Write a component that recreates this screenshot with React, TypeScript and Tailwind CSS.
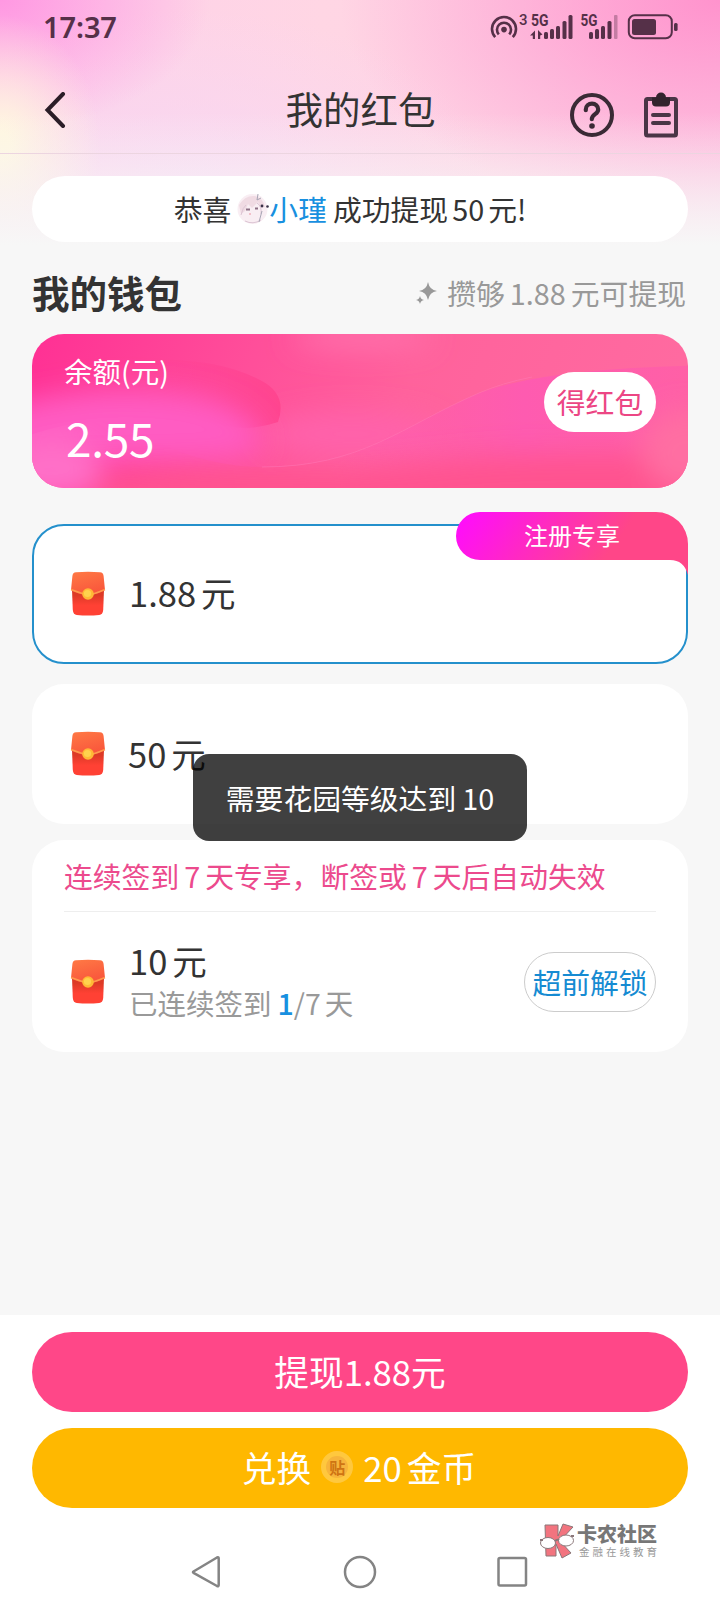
// Packages
import React from "react";

// Status bar icons
const StatusIcons: React.FC = () => (
  <svg width="190" height="32" viewBox="0 0 190 32" fill="none">
    {/* Hotspot */}
    <g stroke="#553048" strokeWidth="2.6">
      <path d="M6.2 25.2A12 12 0 1 1 23.8 25.2" />
      <path d="M9.8 22.4A7 7 0 1 1 20.2 22.4" />
    </g>
    <circle cx="15" cy="17.6" r="2.8" fill="#553048" />
    <g fill="#553048" fontFamily="Roboto, sans-serif">
      <text x="30" y="12.6" fontSize="15" fontWeight="500">3</text>
      <text x="42" y="14.2" fontSize="16" fontWeight="700" textLength="17.5" lengthAdjust="spacingAndGlyphs">5G</text>
      <text x="91.5" y="14.2" fontSize="16" fontWeight="700" textLength="17" lengthAdjust="spacingAndGlyphs">5G</text>
    </g>
    {/* Signal bars */}
    <g fill="#553048">
      <path d="M41 23.5l5-5V27h-2.200v-3.500z" />
      <path d="M53.500 22.500l-4.500-4.500V27h2.200v-3.500z" />
      <rect x="55" y="20" width="4" height="7" rx="1.5" />
      <rect x="61" y="17" width="4" height="10" rx="1.5" />
      <rect x="67" y="14" width="4" height="13" rx="1.5" />
      <rect x="73.5" y="9" width="4" height="18" rx="1.5" />
      <rect x="79.5" y="3" width="4" height="24" rx="1.5" />
      <rect x="100" y="20" width="4" height="7" rx="1.5" />
      <rect x="106" y="17" width="4" height="10" rx="1.5" />
      <rect x="112" y="14" width="4" height="13" rx="1.5" />
      <rect x="118.5" y="9" width="4" height="18" rx="1.5" />
      <rect x="125" y="3" width="3.5" height="24" rx="1" opacity=".35" />
    </g>
    {/* Battery */}
    <rect x="139.8" y="3.3" width="43" height="23" rx="6" stroke="#553048" strokeWidth="2" />
    <rect x="143" y="7" width="24" height="16" rx="2.5" fill="#553048" />
    <rect x="185" y="11" width="3.6" height="8" rx="1.5" fill="#553048" />
  </svg>
);

const HelpIcon: React.FC = () => (
  <svg width="44" height="44" viewBox="0 0 44 44" fill="none" stroke="#3a2a35" strokeLinecap="round">
    <circle cx="22" cy="22" r="20" strokeWidth="4" />
    <path d="M15.8 17.2v-.8a6.200 5.800 0 0 1 12.400 0c0 4.800-6.400 4.800-6.400 9.800" strokeWidth="4.2" />
    <circle cx="22" cy="33" r="2.8" fill="#3a2a35" stroke="none" />
  </svg>
);

const ClipboardIcon: React.FC = () => (
  <svg width="36" height="46" viewBox="0 0 36 46" fill="none">
    <rect x="3" y="7" width="30" height="36.5" rx="1.5" stroke="#4a3546" strokeWidth="4" />
    <path d="M9 5.500h4a5 5 0 0 1 10 0h4v5q0 4-4 4H13q-4 0-4-4z" fill="#33232e" />
    <path d="M10 23h16M10 31h16" stroke="#4a3546" strokeWidth="4" strokeLinecap="round" />
  </svg>
);

const Avatar: React.FC = () => (
  <svg width="32" height="32" viewBox="0 0 32 32">
    <circle cx="15.5" cy="16" r="15" fill="#f9eef3" />
    <path d="M2 12Q8 2 18 3q8 2 10 11l-4 1-3-6-6 6-4-4-3 7-4 3z" fill="#f0dbe3" />
    <path d="M4 22q2-8 5-10M20 10q5 3 4 11M8 28q8 4 16-1" fill="none" stroke="#dcc5d4" />
    <path d="M21 1l-1 6 4-2M25 18l-3 11" fill="none" stroke="#a8a5b5" />
    <path d="M9 16.500h4M18 15.500h3" stroke="#8d7085" strokeWidth="1.8" />
    <circle cx="25" cy="13" r="1.4" fill="#3b3348" />
    <circle cx="30.5" cy="13.5" r="1.3" fill="#3b3348" />
    <circle cx="13" cy="21" r="1" fill="#efb1bd" />
  </svg>
);

const Envelope: React.FC = () => (
  <svg className="shrink-0" width="36" height="46" viewBox="0 0 36 46">
    <defs>
      <linearGradient id="flap" x1="0" y1="0" x2=".4" y2="1">
        <stop stopColor="#ff7a45" />
        <stop offset="1" stopColor="#f9573c" />
      </linearGradient>
      <linearGradient id="pocket" x1="0" y1="0" x2="0" y2="1">
        <stop offset=".2" stopColor="#dd3a26" />
        <stop offset=".6" stopColor="#ff4134" />
      </linearGradient>
    </defs>
    <path d="M2 19h32l-.800 20q-.3 4.500-4 5-11.200 1.200-22.400 0-3.700-.5-4-5z" fill="url(#pocket)" />
    <path d="M6 1.300q12-1 24 0 3.300.3 3.600 3.600L35 19q-7 4.500-17 5Q8 23.500 1 19L2.400 4.900Q2.700 1.600 6 1.300z" fill="url(#flap)" />
    <path d="M1 18.500q8 3 13 4.500h9q5-1.500 12-4.500" fill="none" stroke="#ff9a4d" strokeWidth="1.7" />
    <circle cx="18" cy="23" r="5.8" fill="#ffb936" />
    <circle cx="17.5" cy="22.5" r="3.6" fill="#ffd34d" />
  </svg>
);

// Balance card waves
const CardWaves: React.FC = () => (
  <svg className="absolute inset-0" width="656" height="154" viewBox="0 0 656 154">
    <defs>
      <linearGradient id="base" x1="0" y1="0" x2="1" y2=".1">
        <stop stopColor="#ff3094" />
        <stop offset=".35" stopColor="#ff4f9a" />
        <stop offset=".6" stopColor="#ff629c" />
        <stop offset="1" stopColor="#ff6aa0" />
      </linearGradient>
      <linearGradient id="curl" x1="0" y1="0" x2="1" y2="0">
        <stop stopColor="#ff3d96" stopOpacity="0" />
        <stop offset="1" stopColor="#ff458f" />
      </linearGradient>
      <linearGradient id="fold" x1="0" y1="0" x2="1" y2="0">
        <stop offset=".45" stopColor="#fe5bb0" stopOpacity="0" />
        <stop offset=".75" stopColor="#fe5bb0" />
        <stop offset="1" stopColor="#ff60a6" />
      </linearGradient>
      <filter id="soft" x="-50%" y="-50%" width="200%" height="200%">
        <feGaussianBlur stdDeviation="14" />
      </filter>
      <clipPath id="below">
        <path d="M-60 126Q25 82 90 88Q160 133 230 133C330 133 370 92 447 59Q520 31 716 31V214H-60z" />
      </clipPath>
    </defs>
    <rect width="656" height="154" fill="url(#base)" />
    <g filter="url(#soft)">
      <ellipse cx="330" cy="4" rx="70" ry="10" fill="#ff74ae" />
      <ellipse cx="320" cy="100" rx="90" ry="22" fill="#ff62ab" />
    </g>
    <path d="M120 26Q185 24 228 46Q256 60 246 88Q190 108 130 60z" fill="url(#curl)" />
    <g filter="url(#soft)">
      <path d="M-30 75Q60 48 150 60Q215 70 230 105Q240 124 160 126L-30 130z" fill="#ff5bc2" />
    </g>
    <g clipPath="url(#below)">
      <path d="M0 154V126Q25 82 90 88Q160 133 230 133C330 133 370 92 447 59Q520 31 656 31V154z" fill="url(#fold)" />
      <g filter="url(#soft)">
        <path d="M60 150Q180 132 300 138L440 124Q560 116 690 124V200H60z" fill="#ff528f" />
        <ellipse cx="20" cy="134" rx="50" ry="32" fill="#ff70c8" />
        <ellipse cx="655" cy="116" rx="45" ry="40" fill="#ff6ea2" />
      </g>
    </g>
    <path d="M230 133C330 133 370 92 447 59Q470 49 500 43" fill="none" stroke="#ff79b8" strokeOpacity=".5" />
  </svg>
);

const Watermark: React.FC = () => (
  <div className="absolute left-[540px] top-[1523px] flex items-center gap-[3px]">
    <svg width="34" height="36" viewBox="0 0 34 36" stroke="#8b7779" strokeWidth="1">
      <path d="M5 2h13v11l5-12 10 3-13 14 11 12-9 5-6-14v12H6z" fill="#f2747f" />
      <ellipse cx="8" cy="20" rx="7.5" ry="5.5" fill="#fff" />
      <ellipse cx="26" cy="17.5" rx="7.5" ry="5.5" fill="#fff" />
      <path d="M15 18q2-2 4-1M0 17h3M31 13h3" fill="none" strokeWidth="2" />
    </svg>
    <div className="flex flex-col">
      <span className="text-[20px] font-black leading-[21px] text-[#777]">卡农社区</span>
      <span className="pl-[2px] pt-px text-[10.5px] leading-[14px] tracking-[3px] text-[#999]">金融在线教育</span>
    </div>
  </div>
);

const App: React.FC = () => {
  return (
    <div className="relative flex h-[1612px] w-[720px] flex-col overflow-hidden whitespace-nowrap bg-[#f7f7f7] font-['Noto_Sans_CJK_SC',sans-serif] text-[28.8px] text-[#333]">
      {/* Page glow */}
      <div className="absolute inset-x-0 top-0 h-[250px] bg-[linear-gradient(to_bottom,transparent_45%,#f7f7f7_98%),radial-gradient(ellipse_100px_130px_at_0px_145px,#fff6df_10%,transparent),radial-gradient(ellipse_210px_130px_at_0px_0px,#ff98e2,transparent),radial-gradient(ellipse_380px_220px_at_720px_0px,#ff93cd,transparent),radial-gradient(ellipse_300px_170px_at_190px_180px,#f8d8f2,transparent),linear-gradient(to_right,#fdd0ea,#ffd6e4_45%,#fdcde4)]" />

      {/* Header */}
      <header className="relative h-[154px] border-b border-[#ecd5e0]">
        <div className="flex h-[54px] items-center justify-between pl-[43px] pr-[41px]">
          <span className="font-['Noto_Sans'] text-[29px] font-semibold tracking-[-0.1px] text-[#553048]">17:37</span>
          <span className="pt-px"><StatusIcons /></span>
        </div>
        <div className="grid h-[112px] grid-cols-3 items-center pl-11 pr-[41px]">
          <svg width="22" height="36" viewBox="0 0 22 36" fill="none" stroke="#2b1d27" strokeWidth="4">
            <path d="M19 2L3.500 18L19 34" strokeLinecap="round" />
          </svg>
          <h1 className="-ml-0.5 mb-1 justify-self-center text-[37.5px] leading-none">我的红包</h1>
          <div className="flex items-center gap-[29px] justify-self-end pt-[9px]">
            <HelpIcon />
            <ClipboardIcon />
          </div>
        </div>
      </header>

      <main className="relative flex grow flex-col px-8 pt-[22px]">
        {/* Notice */}
        <div className="flex h-[66px] items-center justify-center rounded-full bg-white pr-5">
          <span>恭喜</span>
          <span className="ml-1.5"><Avatar /></span>
          <span className="text-[#1890e0]">小瑾</span>
          <span className="ml-1.5">成功提现</span>
          <span className="mx-1">50</span>
          <span>元!</span>
        </div>

        {/* Wallet title */}
        <div className="flex h-[92px] items-center justify-between pt-2.5">
          <h2 className="mb-0.5 text-[37.5px] font-bold leading-none">我的钱包</h2>
          <div className="flex items-center pr-0.5 text-[#999]">
            <svg className="mr-2" width="24" height="24" viewBox="0 0 24 24" fill="#999">
              <path d="M13 1q1.500 8 9 9-7.500 1-9 9-1.500-8-9-9 7.500-1 9-9zM5 15q.7 3.300 4 4-3.300.7-4 4-.7-3.300-4-4 3.300-.7 4-4z" />
            </svg>
            <span>攒够</span>
            <span className="mx-[5px]">1.88</span>
            <span>元可提现</span>
          </div>
        </div>

        {/* Balance */}
        <section className="relative h-[154px] overflow-hidden rounded-[32px]">
          <CardWaves />
          <div className="relative flex h-full items-center justify-between px-8 text-white">
            <div className="flex flex-col self-start pt-[17px]">
              <span className="text-[28.5px] leading-10">余额(元)</span>
              <span className="mt-4 pl-0.5 text-[46px] leading-[60px] tracking-[-0.3px]">2.55</span>
            </div>
            <button className="mb-[18px] h-[60px] w-28 rounded-full bg-white text-[#ec4684]">得红包</button>
          </div>
        </section>

        {/* Amount list */}
        <section className="relative mt-9 flex h-[140px] items-center rounded-[32px] border-2 border-[#2490cc] bg-white pl-9">
          <Envelope />
          <span className="mb-0.5 ml-[23px] text-[34.5px]">1.88<span className="ml-[5px]">元</span></span>
          <div className="absolute -right-0.5 -top-3.5 h-16 w-[232px]">
            <svg className="absolute inset-0" width="232" height="64" viewBox="0 0 232 64">
              <defs>
                <linearGradient id="tag" x1="0" y1=".2" x2="1" y2=".4">
                  <stop stopColor="#ff0dfb" />
                  <stop offset=".72" stopColor="#ff4688" />
                </linearGradient>
              </defs>
              <path d="M214 48h2a14 14 0 0 1 14 14L226 48z" fill="#fff" />
              <path d="M24 0H200a32 32 0 0 1 32 32V63Q228 48 214 48H24A24 24 0 0 1 24 0z" fill="url(#tag)" />
            </svg>
            <span className="relative flex h-[46px] items-center justify-center text-[24px] text-white">注册专享</span>
          </div>
        </section>

        <section className="mt-5 flex h-[140px] items-center rounded-[32px] bg-white pl-[38px]">
          <Envelope />
          <span className="ml-[22px] text-[34.5px]">50<span className="ml-[5px]">元</span></span>
        </section>

        <section className="mt-4 h-[212px] rounded-[32px] bg-white px-8">
          <p className="flex h-[72px] items-center border-b border-[#eee] text-[#ec4a8d]">
            <span>连续签到</span>
            <span className="mx-[5px]">7</span>
            <span>天专享，断签或</span>
            <span className="mx-[5px]">7</span>
            <span>天后自动失效</span>
          </p>
          <div className="flex h-[140px] items-center">
            <span className="ml-1.5"><Envelope /></span>
            <div className="mb-[3px] ml-[23px] flex flex-col">
              <span className="text-[34.5px] leading-[45px]">10<span className="ml-[5px]">元</span></span>
              <span className="text-[28.5px] leading-10 text-[#999]">
                已连续签到
                <span className="ml-1.5 font-medium text-[#1890e0]">1</span>/7<span className="ml-1">天</span>
              </span>
            </div>
            <button className="ml-auto h-[60px] w-[132px] rounded-full border border-[#ccc] text-[#168bd2]">超前解锁</button>
          </div>
        </section>
      </main>

      {/* Bottom actions */}
      <footer className="relative flex h-[297px] flex-col gap-4 bg-white px-8 pt-[17px] text-[34.7px] text-white">
        <button className="h-20 rounded-full bg-[#ff4788] pb-0.5">提现1.88元</button>
        <button className="flex h-20 items-center justify-center rounded-full bg-[#ffb800] pb-0.5 pr-0.5">
          <span>兑换</span>
          <span className="mx-[10px] flex size-8 items-center justify-center rounded-full border-[5px] border-[#ffc83e] bg-[#f7b43b] text-[16px] font-bold text-[#cf7413]">贴</span>
          <span>20</span>
          <span className="ml-[5px]">金币</span>
        </button>

        {/* System navigation */}
        <svg className="ml-[158px] mt-[30px]" width="340" height="36" viewBox="0 0 340 36" fill="none" stroke="#848484" strokeWidth="2.5" strokeLinejoin="round">
          <path d="M3.500 17.500L27 3.500q1.700-.8 1.700 1V31q0 1.800-1.700 1L3.500 18.800q-1-.6 0-1.300z" />
          <circle cx="170" cy="18" r="15" />
          <rect x="308.5" y="4" width="27.5" height="27.5" rx="1.5" />
        </svg>
      </footer>
      <Watermark />

      {/* Toast */}
      <div className="absolute left-[193px] top-[754px] flex h-[87px] w-[334px] items-center justify-center rounded-2xl bg-black/75 text-white">
        <span>需要花园等级达到</span>
        <span className="ml-1.5">10</span>
      </div>
    </div>
  );
};

export default App;
